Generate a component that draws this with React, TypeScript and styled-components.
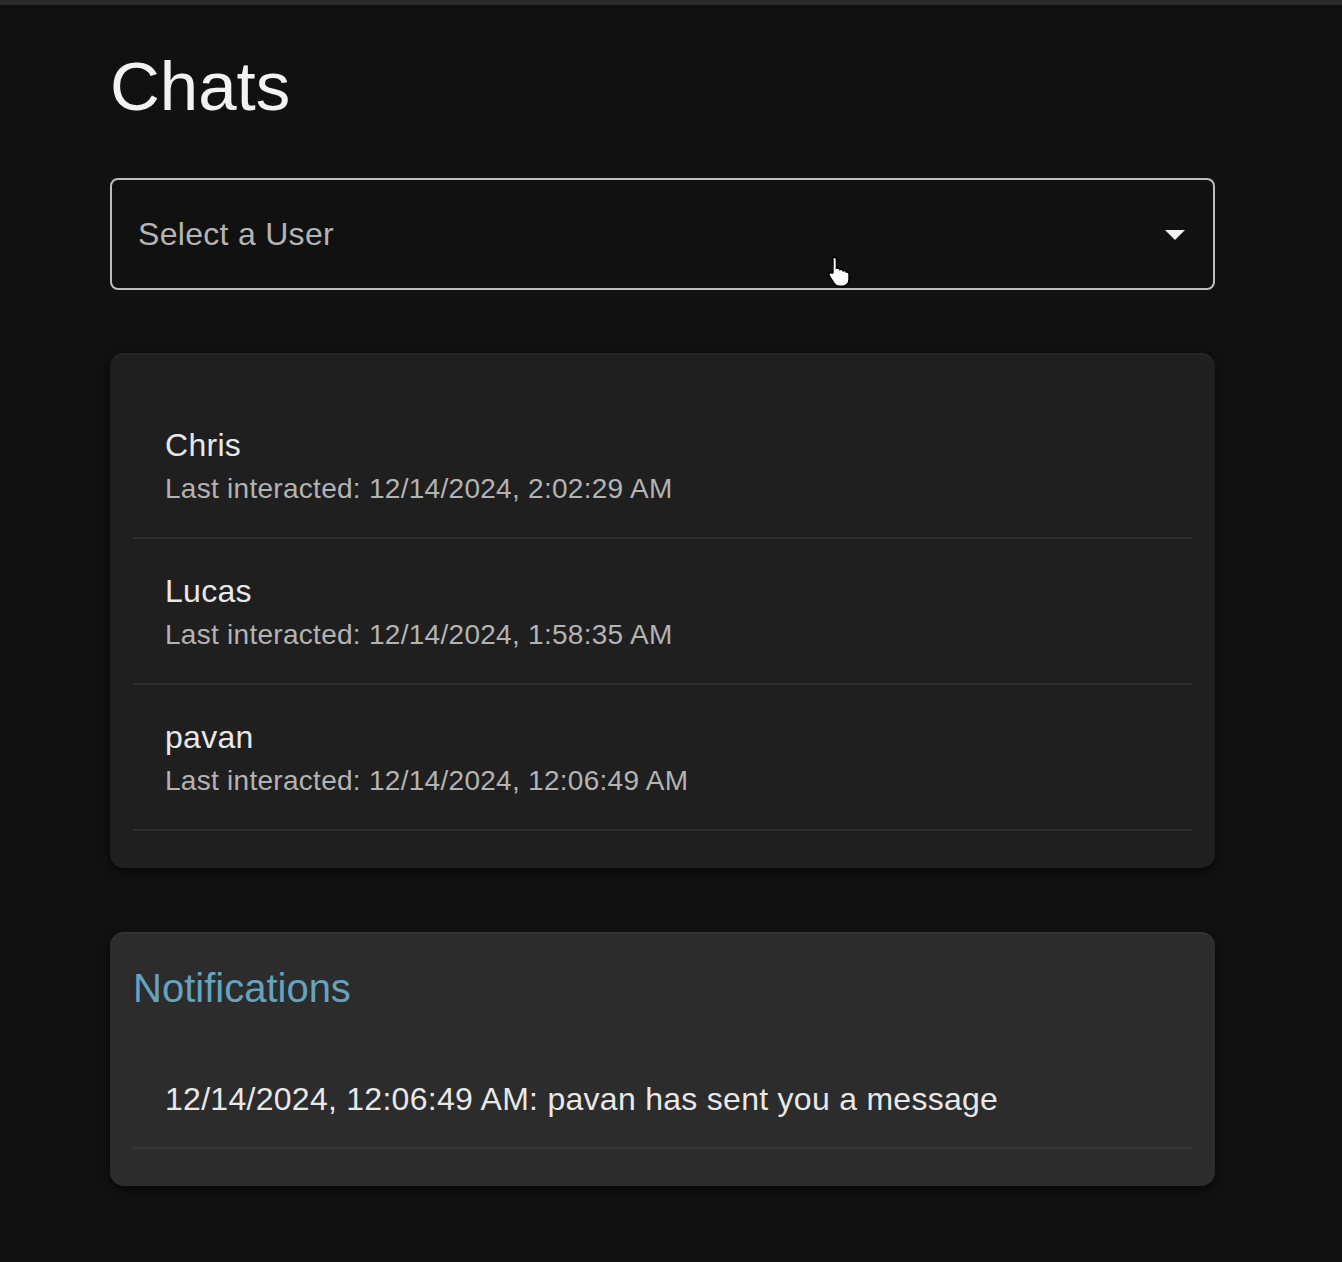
import * as React from 'react';
import styled, { createGlobalStyle } from 'styled-components';

const GlobalStyle = createGlobalStyle`
  html, body {
    margin: 0;
    padding: 0;
    background: #111111;
  }
  body {
    font-family: 'Liberation Sans', Arial, Helvetica, sans-serif;
    color: #e6e6e6;
  }
`;

interface Chat {
  name: string;
  lastInteracted: string;
}

const chats: Chat[] = [
  { name: 'Chris', lastInteracted: '12/14/2024, 2:02:29 AM' },
  { name: 'Lucas', lastInteracted: '12/14/2024, 1:58:35 AM' },
  { name: 'pavan', lastInteracted: '12/14/2024, 12:06:49 AM' },
];

const notifications = ['12/14/2024, 12:06:49 AM: pavan has sent you a message'];

const Page = styled.div`
  min-height: 1262px;
  box-sizing: border-box;
  border-top: 5px solid #2b2b2b;
  padding: 40px 127px 60px 110px;
  position: relative;
`;

const Title = styled.h1`
  margin: 0;
  font-size: 69px;
  line-height: 84px;
  font-weight: 400;
  color: #f2f2f2;
`;

const SelectBox = styled.div`
  margin-top: 49px;
  height: 112px;
  box-sizing: border-box;
  border: 2px solid #bdbdbd;
  border-radius: 8px;
  display: flex;
  align-items: center;
  justify-content: space-between;
  padding: 0 14px 0 26px;
`;

const Placeholder = styled.span`
  font-size: 32px;
  letter-spacing: 0.3px;
  color: #b4b4b4;
`;

const Card = styled.div<{ $tone: 'dark' | 'light' }>`
  margin-top: ${(p) => (p.$tone === 'dark' ? '63px' : '64px')};
  background: ${(p) => (p.$tone === 'dark' ? '#1f1f1f' : '#2c2c2c')};
  border-radius: 14px;
  padding: 24px 23px 21px;
  box-shadow: 0 4px 10px rgba(0, 0, 0, 0.6), inset 0 2px 0 rgba(255, 255, 255, 0.04);
`;

const List = styled.ul<{ $flushTop?: boolean }>`
  list-style: none;
  margin: 0;
  padding: ${(p) => (p.$flushTop ? '0 0 16px' : '16px 0')};
`;

const Item = styled.li`
  padding: 20px 32px;
  border-bottom: 2px solid #2d2d2d;
`;

const TextBlock = styled.div`
  margin: 8px 0;
`;

const Primary = styled.div`
  font-size: 32px;
  line-height: 48px;
  letter-spacing: 0.28px;
  color: #e8e8e8;
`;

const Secondary = styled.div`
  font-size: 28px;
  line-height: 40px;
  letter-spacing: 0.28px;
  color: #b3b3b3;
`;

const CardHeading = styled.h2`
  margin: 0 0 27px;
  font-size: 40px;
  line-height: 64px;
  font-weight: 400;
  color: #66a3c0;
`;

const NoteItem = styled(Item)`
  border-bottom-color: #363636;
  padding: 20px 32px 16px;
`;

const Cursor = styled.svg`
  position: absolute;
  left: 826px;
  top: 249px;
  width: 30px;
  height: 34px;
`;

const DropArrow = () => (
  <svg width="48" height="48" viewBox="0 0 24 24">
    <path d="M7 10l5 5 5-5z" fill="#f0f0f0" />
  </svg>
);

export default function App() {
  return (
    <>
      <GlobalStyle />
      <Page>
        <Title>Chats</Title>
        <SelectBox>
          <Placeholder>Select a User</Placeholder>
          <DropArrow />
        </SelectBox>

        <Card $tone="dark">
          <List>
            {chats.map((c) => (
              <Item key={c.name}>
                <TextBlock>
                  <Primary>{c.name}</Primary>
                  <Secondary>Last interacted: {c.lastInteracted}</Secondary>
                </TextBlock>
              </Item>
            ))}
          </List>
        </Card>

        <Card $tone="light">
          <CardHeading>Notifications</CardHeading>
          <List $flushTop>
            {notifications.map((n) => (
              <NoteItem key={n}>
                <TextBlock>
                  <Primary>{n}</Primary>
                </TextBlock>
              </NoteItem>
            ))}
          </List>
        </Card>

        <Cursor viewBox="0 0 15 17">
          <path
            d="M4 1.5c.8 0 1.3.5 1.3 1.3V7l.5-.1c.7 0 1.1.4 1.2.8.6-.3 1.4 0 1.6.6.6-.3 1.4 0 1.6.7.7-.2 1.4.3 1.4 1v2.6c0 2-1.4 3.6-3.4 3.6H6.6c-1.2 0-2-.6-2.7-1.6L1.6 11c-.4-.6-.2-1.3.4-1.6.5-.3 1.1-.1 1.5.3l-.1-.1V2.8C3.4 2 3.2 1.5 4 1.5z"
            fill="#ffffff"
            stroke="#000000"
            strokeWidth="0.9"
          />
        </Cursor>
      </Page>
    </>
  );
}
